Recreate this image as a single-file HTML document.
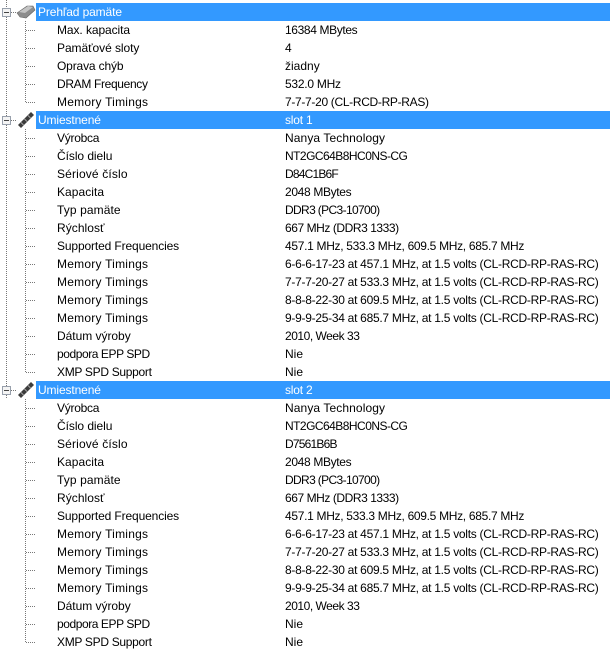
<!DOCTYPE html>
<html><head><meta charset="utf-8">
<style>
html,body{margin:0;padding:0;background:#fff;}
#p{position:relative;width:610px;height:669px;overflow:hidden;background:#fff;font-family:"Liberation Sans",sans-serif;font-size:12px;color:#000;}
.r{position:absolute;left:0;width:610px;height:18px;line-height:18px;white-space:nowrap;}
.r span{position:absolute;top:0;}
.a{left:57px;}.b{left:285px;}
.h{left:36px;width:574px;background:#3399ff;color:#fff;}
.h .a{left:2px;letter-spacing:-.12px;}.h .b{left:249px;letter-spacing:-.2px;}
svg{position:absolute;left:0;top:0;}
.mt{letter-spacing:.23px;}.long{letter-spacing:-.28px;}.fq{letter-spacing:-.31px;}
.vy{letter-spacing:-.27px;}.cd{letter-spacing:-.06px;}.so{letter-spacing:.15px;}.ka{letter-spacing:.05px;}.ty{letter-spacing:.1px;}.ry{letter-spacing:.05px;}.su{letter-spacing:-.13px;}.da{letter-spacing:-.03px;}.ep{letter-spacing:-.43px;}.xm{letter-spacing:-.3px;}
.na{letter-spacing:.1px;}.nt{letter-spacing:-.53px;}.sn{letter-spacing:-.8px;}.mb{letter-spacing:-.34px;}.dd{letter-spacing:-.64px;}.sp{letter-spacing:-.44px;}.yr{letter-spacing:-.47px;}
</style></head><body><div id="p">
<svg width="610" height="669" viewBox="0 0 610 669">
<g stroke="#777" stroke-width="1" stroke-dasharray="1 1" fill="none" shape-rendering="crispEdges">
<path d="M6.5 0V8M6.5 17V116M6.5 125V386M6.5 395V399"/>
<path d="M25.5 21V102.5H36M25.5 129V372.5H36M25.5 399V642.5H36"/>
<path d="M26 30.5H36M26 48.5H36M26 66.5H36M26 84.5H36"/>
<path d="M26 138.5H36M26 156.5H36M26 174.5H36M26 192.5H36M26 210.5H36M26 228.5H36M26 246.5H36M26 264.5H36M26 282.5H36M26 300.5H36M26 318.5H36M26 336.5H36M26 354.5H36"/>
<path d="M26 408.5H36M26 426.5H36M26 444.5H36M26 462.5H36M26 480.5H36M26 498.5H36M26 516.5H36M26 534.5H36M26 552.5H36M26 570.5H36M26 588.5H36M26 606.5H36M26 624.5H36"/>
<path d="M11 12.5H17M11 120.5H17M11 390.5H17"/>
</g>
<g fill="#f4f4f4" stroke="#98a0ac" shape-rendering="crispEdges">
<rect x="2.5" y="8.5" width="8" height="8"/><rect x="2.5" y="116.5" width="8" height="8"/><rect x="2.5" y="386.5" width="8" height="8"/>
</g>
<path d="M4 12.5H9M4 120.5H9M4 390.5H9" stroke="#444" shape-rendering="crispEdges"/>
<path d="M17 13L27 6L33 6L35 10L26 18L20 17Z" fill="#8c8c8c" stroke="#666" stroke-width=".6"/>
<path d="M19 12L28 6L33 7L25 13Z" fill="#c4c4c4"/>
<g><path d="M18 125L31 112L34 115L21 128Z" fill="#3c3c3c"/><path d="M21 122.500L23.500 125M24.500 119L27 121.500M28 115.500L30.500 118" stroke="#a5a5a5" stroke-width="1"/></g>
<g transform="translate(0 270)"><path d="M18 125L31 112L34 115L21 128Z" fill="#3c3c3c"/><path d="M21 122.500L23.500 125M24.500 119L27 121.500M28 115.500L30.500 118" stroke="#a5a5a5" stroke-width="1"/></g>
</svg>

<div class="r h" style="top:3px"><span class="a">Prehľad pamäte</span></div>
<div class="r" style="top:21px"><span class="a" style="letter-spacing:-.08px">Max. kapacita</span><span class="b" style="letter-spacing:-.37px">16384 MBytes</span></div>
<div class="r" style="top:39px"><span class="a" style="letter-spacing:-.06px">Pamäťové sloty</span><span class="b">4</span></div>
<div class="r" style="top:57px"><span class="a" style="letter-spacing:-.15px">Oprava chýb</span><span class="b">žiadny</span></div>
<div class="r" style="top:75px"><span class="a" style="letter-spacing:-.34px">DRAM Frequency</span><span class="b" style="letter-spacing:-.25px">532.0 MHz</span></div>
<div class="r" style="top:93px"><span class="a mt">Memory Timings</span><span class="b" style="letter-spacing:-.32px">7-7-7-20 (CL-RCD-RP-RAS)</span></div>

<div class="r h" style="top:111px"><span class="a">Umiestnené</span><span class="b">slot 1</span></div>
<div class="r" style="top:129px"><span class="a vy">Výrobca</span><span class="b na">Nanya Technology</span></div>
<div class="r" style="top:147px"><span class="a cd">Číslo dielu</span><span class="b nt">NT2GC64B8HC0NS-CG</span></div>
<div class="r" style="top:165px"><span class="a so">Sériové číslo</span><span class="b sn">D84C1B6F</span></div>
<div class="r" style="top:183px"><span class="a ka">Kapacita</span><span class="b mb">2048 MBytes</span></div>
<div class="r" style="top:201px"><span class="a ty">Typ pamäte</span><span class="b dd">DDR3 (PC3-10700)</span></div>
<div class="r" style="top:219px"><span class="a ry">Rýchlosť</span><span class="b sp">667 MHz (DDR3 1333)</span></div>
<div class="r" style="top:237px"><span class="a su">Supported Frequencies</span><span class="b fq">457.1 MHz, 533.3 MHz, 609.5 MHz, 685.7 MHz</span></div>
<div class="r" style="top:255px"><span class="a mt">Memory Timings</span><span class="b long">6-6-6-17-23 at 457.1 MHz, at 1.5 volts (CL-RCD-RP-RAS-RC)</span></div>
<div class="r" style="top:273px"><span class="a mt">Memory Timings</span><span class="b long">7-7-7-20-27 at 533.3 MHz, at 1.5 volts (CL-RCD-RP-RAS-RC)</span></div>
<div class="r" style="top:291px"><span class="a mt">Memory Timings</span><span class="b long">8-8-8-22-30 at 609.5 MHz, at 1.5 volts (CL-RCD-RP-RAS-RC)</span></div>
<div class="r" style="top:309px"><span class="a mt">Memory Timings</span><span class="b long">9-9-9-25-34 at 685.7 MHz, at 1.5 volts (CL-RCD-RP-RAS-RC)</span></div>
<div class="r" style="top:327px"><span class="a da">Dátum výroby</span><span class="b yr">2010, Week 33</span></div>
<div class="r" style="top:345px"><span class="a ep">podpora EPP SPD</span><span class="b">Nie</span></div>
<div class="r" style="top:363px"><span class="a xm">XMP SPD Support</span><span class="b">Nie</span></div>

<div class="r h" style="top:381px"><span class="a">Umiestnené</span><span class="b">slot 2</span></div>
<div class="r" style="top:399px"><span class="a vy">Výrobca</span><span class="b na">Nanya Technology</span></div>
<div class="r" style="top:417px"><span class="a cd">Číslo dielu</span><span class="b nt">NT2GC64B8HC0NS-CG</span></div>
<div class="r" style="top:435px"><span class="a so">Sériové číslo</span><span class="b sn">D7561B6B</span></div>
<div class="r" style="top:453px"><span class="a ka">Kapacita</span><span class="b mb">2048 MBytes</span></div>
<div class="r" style="top:471px"><span class="a ty">Typ pamäte</span><span class="b dd">DDR3 (PC3-10700)</span></div>
<div class="r" style="top:489px"><span class="a ry">Rýchlosť</span><span class="b sp">667 MHz (DDR3 1333)</span></div>
<div class="r" style="top:507px"><span class="a su">Supported Frequencies</span><span class="b fq">457.1 MHz, 533.3 MHz, 609.5 MHz, 685.7 MHz</span></div>
<div class="r" style="top:525px"><span class="a mt">Memory Timings</span><span class="b long">6-6-6-17-23 at 457.1 MHz, at 1.5 volts (CL-RCD-RP-RAS-RC)</span></div>
<div class="r" style="top:543px"><span class="a mt">Memory Timings</span><span class="b long">7-7-7-20-27 at 533.3 MHz, at 1.5 volts (CL-RCD-RP-RAS-RC)</span></div>
<div class="r" style="top:561px"><span class="a mt">Memory Timings</span><span class="b long">8-8-8-22-30 at 609.5 MHz, at 1.5 volts (CL-RCD-RP-RAS-RC)</span></div>
<div class="r" style="top:579px"><span class="a mt">Memory Timings</span><span class="b long">9-9-9-25-34 at 685.7 MHz, at 1.5 volts (CL-RCD-RP-RAS-RC)</span></div>
<div class="r" style="top:597px"><span class="a da">Dátum výroby</span><span class="b yr">2010, Week 33</span></div>
<div class="r" style="top:615px"><span class="a ep">podpora EPP SPD</span><span class="b">Nie</span></div>
<div class="r" style="top:633px"><span class="a xm">XMP SPD Support</span><span class="b">Nie</span></div>
</div></body></html>
